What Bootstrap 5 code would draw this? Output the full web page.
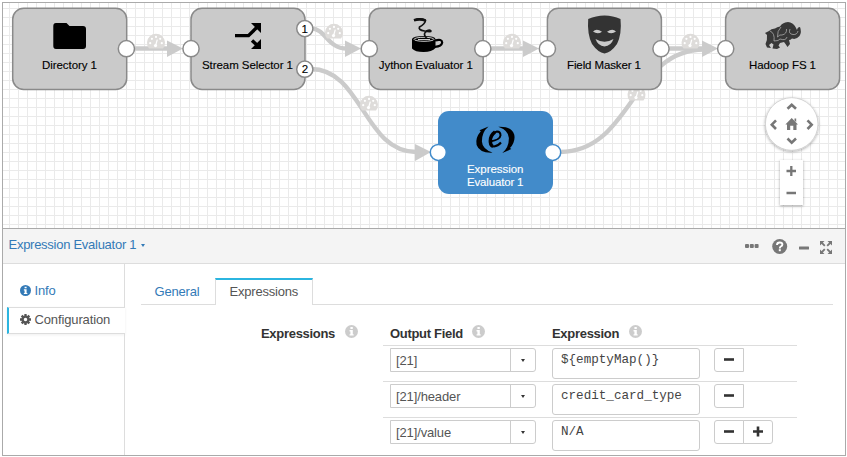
<!DOCTYPE html>
<html lang="en">
<head>
<meta charset="utf-8">
<title>Pipeline canvas</title>
<link href="https://cdn.jsdelivr.net/npm/bootstrap@5.3.0/dist/css/bootstrap.min.css" rel="stylesheet">
<style>
body{font-family:"Liberation Sans",Arial,sans-serif;font-size:13px;line-height:18px;letter-spacing:-.13px;color:#555;background:#fff;overflow:hidden}
svg{display:block;flex:none}
svg text{font-family:"Liberation Sans",Arial,sans-serif;letter-spacing:0}
.app-frame{width:844px;height:454px;margin:2px;border:1px solid #aaa;overflow:hidden}
.pipeline{height:225px;flex:none}
.panel-head{height:36px;border-top:1px solid #aaa;border-bottom:1px solid #ddd;background:#f4f4f4;padding:0 13px 2px 5.5px;flex:none;color:#337ab7}
.panel-title{letter-spacing:-.27px}
.panel-tools{margin-top:3px}
.caret-sm{border:2.5px solid transparent;border-top:3px solid currentColor;border-bottom:0;margin-left:5px}
.side{width:122px;flex:none}
.side-top{height:43px;border-right:1px solid #ddd;padding:18px 0 0 17px;color:#337ab7}
.side-active{height:27px;margin-left:4px;border:solid #ddd;border-width:1px 0;border-left:2px solid #2bb5e0;padding:3px 0 0 11px;box-shadow:0 1px 3px #0001}
.side-rest{border-right:1px solid #ddd}
.side svg{margin-right:3.5px}
.gear{margin-top:3px}
.content-pane{margin-left:16px;width:692px;flex:none;padding-top:14px}
.tab-row{height:27px;border-bottom:1px solid #ddd;letter-spacing:-.2px}
.tab-row .tab-a{width:74px;padding:5px 0 0 13.5px;color:#337ab7}
.tab-row .tab-b{width:98px;height:27px;border:1px solid #ddd;border-top:2px solid #2bb5e0;border-bottom:0;background:#fff;padding:3px 0 0 13.5px}
.form-area{padding-top:19px;color:#333}
.lbl-main{width:242px;padding-left:120px;flex:none}
.f-table{width:414px;flex:none}
.heading{letter-spacing:-.3px;font-weight:700;padding-top:1px;line-height:17px}
.heading svg{margin-left:9.500px}
.h-row{height:21px;padding-left:7px}
.h-row>div:first-child{width:162px}
.f-row{height:36px;border-top:1px solid #ddd;padding:2px 0 0 7px}
.pick{width:146px;height:24px;border:1px solid #ccc;border-radius:0 3px 3px 0;color:#555;flex:none}
.pick>span:first-child{width:120px;border-right:1px solid #ccc;padding:3px 0 0 5px}
.pick .caret-sm{margin:auto;color:#333}
.code-box{width:148px;height:31px;margin-left:16px;border:1px solid #ccc;border-radius:3px;padding:2px 0 0 8px;font:12.6px/18px "Liberation Mono","Courier New",monospace;letter-spacing:0;color:#444;flex:none;box-sizing:border-box}
.pm{margin-left:14px;height:24px}
.pm span{width:30px;height:24px;border:1px solid #ccc}
.pm span:first-child{border-radius:3px 0 0 3px}
.pm span+span{margin-left:-1px;border-radius:0 3px 3px 0}
</style>
<script src="https://cdn.jsdelivr.net/npm/bootstrap@5.3.0/dist/js/bootstrap.bundle.min.js"></script>
</head>
<body>
<div class="app-frame d-flex flex-column">
<div class="pipeline">
<svg width="842" height="225" viewBox="3 3 842 225">
<defs>
<pattern id="grid" width="9" height="9" patternUnits="userSpaceOnUse" x="0" y="8"><path d="M0 .5H9M.5 0V9" stroke="#eaeaea"/></pattern>
<symbol id="gauge" viewBox="0 0 18 15" overflow="visible"><path d="M2 14.5A9 9 0 1 1 16 14.5Z" fill="#dedcda"/><g fill="#fff"><circle cx="3.2" cy="9.2" r="1.1"/><circle cx="4.9" cy="4.8" r="1.1"/><circle cx="9" cy="2.9" r="1.1"/><circle cx="13.2" cy="4.8" r="1.1"/><circle cx="14.8" cy="9.2" r="1.1"/><circle cx="8.5" cy="11.6" r="1.6"/></g><path d="M8.6 11.5L10.3 5.6" stroke="#fff" stroke-width="1.2"/></symbol>
<symbol id="info" viewBox="0 0 12 12"><circle cx="6" cy="6" r="6" fill="currentColor"/><path d="M5 1.8H7.2V3.6H5ZM4.2 4.7H7.2V8.6H8V9.8H4.2V8.6H5V5.9H4.2Z" fill="#fff"/></symbol>
<filter id="soft" x="-20%" y="-20%" width="140%" height="140%"><feDropShadow dx="0" dy="1" stdDeviation="1.4" flood-opacity=".35"/></filter>
</defs>
<rect x="3" y="3" width="842" height="225" fill="url(#grid)"/>
<g fill="none" stroke="#cbcbcb" stroke-width="4.300">
<path d="M134 48.5H168M490 48.5H524M669 48.5H703"/>
<path d="M311 28.5C326 28.5 327 48.5 347 48.5"/>
<path d="M311 69C362 69 364 152 416 152"/>
<path d="M560 152C632 152 632 49.5 704 49.5"/>
</g>
<path fill="#cbcbcb" d="M167 40.5L183 48.5L167 57ZM345 40.5L361 48.5L345 57ZM523 40.5L539 48.5L523 57ZM702 40.5L718 48.5L702 57ZM415 144L431 152L415 161Z"/>
<use href="#gauge" x="147" y="34" width="18" height="15"/>
<use href="#gauge" x="325" y="24" width="18" height="15"/>
<use href="#gauge" x="503" y="34" width="18" height="15"/>
<use href="#gauge" x="681.5" y="34" width="18" height="15"/>
<use href="#gauge" x="360" y="96" width="18" height="15"/>
<use href="#gauge" x="627.5" y="86" width="18" height="15"/>
<g fill="#cacaca" stroke="#8a8a8a" stroke-width="1.5">
<rect x="12.7" y="8.2" width="114" height="81.2" rx="11"/><rect x="191" y="8.2" width="114" height="81.2" rx="11"/><rect x="369.2" y="8.2" width="114" height="81.2" rx="11"/><rect x="547.4" y="8.2" width="114" height="81.2" rx="11"/><rect x="725.6" y="8.2" width="114" height="81.2" rx="11"/>
</g>
<rect x="438" y="111" width="115" height="83" rx="11" fill="#428bca"/>
<g fill="#fff" stroke="#8a8a8a" stroke-width="1.5">
<circle cx="126.4" cy="48.7" r="8.1"/><circle cx="191" cy="48.7" r="8.1"/><circle cx="304.8" cy="28.6" r="8.1"/><circle cx="304.8" cy="69.2" r="8.1"/><circle cx="369.3" cy="48.7" r="8.1"/><circle cx="482.8" cy="48.7" r="8.1"/><circle cx="547.4" cy="48.7" r="8.1"/><circle cx="661" cy="48.7" r="8.1"/><circle cx="725.7" cy="48.7" r="8.1"/>
<g stroke="#428bca"><circle cx="438.3" cy="152.4" r="8"/><circle cx="552.7" cy="152.4" r="8"/></g>
</g>
<g font-size="11.5" fill="#000" stroke="#000" stroke-width=".12">
<text x="42" y="69.3" textLength="55">Directory 1</text>
<text x="202" y="69.3" textLength="91">Stream Selector 1</text>
<text x="378.8" y="69.3" textLength="94">Jython Evaluator 1</text>
<text x="567" y="69.3" textLength="74">Field Masker 1</text>
<text x="749" y="69.3" textLength="67">Hadoop FS 1</text>
<text x="301.6" y="32.700">1</text><text x="301.8" y="73.300">2</text>
<g fill="#fff" stroke="#fff"><text x="467" y="173" textLength="56.5">Expression</text><text x="467" y="185.5" textLength="56.5">Evaluator 1</text></g>
</g>
<path d="M56 23H66.5L69.5 26H83Q86 26 86 29V46Q86 49 83 49H56Q53.3 49 53.3 46V26Q53.3 23 56 23Z"/>
<path d="M235 35.6H248.5L257 27.3M252 40.5L258 46" fill="none" stroke="#000" stroke-width="3.4"/><path d="M251 23H261V33ZM261 39V49H251Z"/>
<!-- Coffee cup -->
<path d="M412 39Q413 36 424 36Q435 36 435.500 39V48Q432 52 423.500 52Q415 52 412 48.500Z"/>
<path d="M435 40.500Q442 38.500 442.200 42.500Q441.500 46.500 435 46.800" fill="none" stroke="#000" stroke-width="2.200"/>
<ellipse cx="424" cy="39.300" rx="10" ry="2" fill="none" stroke="#ccc" stroke-width="1"/><path d="M418 39.500H430" stroke="#ccc" stroke-width="1"/>
<path d="M414 20.200Q421 17.500 425.500 20.500Q425 24 419.500 27Q418 30 424.500 31Q431 32.500 431 31Q429 29 425.500 32Q423 34.500 426.500 38" fill="none" stroke="#111" stroke-width="1.700"/><path d="M414 20.200Q420 18.500 425.500 20.500" fill="none" stroke="#111" stroke-width="2.600"/>
<!-- Mask -->
<path fill="#333" fill-rule="evenodd" d="M588.200 19Q596 15.500 604.500 15.500Q613 15.500 620.500 19Q622 34 617 44Q611 52.500 604.500 53.500Q598 52.500 592 44Q587 34 588.200 19ZM593 31.500Q596.500 28 602 31.800Q597.500 35 593 31.500ZM607 31.800Q612.500 28 616 31.500Q611.500 35 607 31.800ZM595.500 39Q604.500 44.500 613.500 39Q611 46 604.500 46.500Q598 46 595.500 39Z"/>
<!-- Elephant -->
<path fill="#383838" d="M765 33L769 31Q771 28.500 775 28.500Q777 27 780 26.500Q782 22.500 788 22Q793 22.500 795.500 27L797 30Q797.500 27 800 27Q802 32 799.500 36Q796 40 792 38.500Q790.500 40 789 40L790 44L787.500 47L785.500 44L784 42L780 43L778.500 45.500L780 47.500L777 49L772.500 48.500L773.500 44.500L771.500 43L769 45L771 48L767 47.500L765.500 44Q767.500 40 767 35Z"/>
<path fill="none" stroke="#b8b8b8" stroke-width=".7" d="M770 31Q775 33 774 41Q779 41 780 39Q786 41 787 37M781 27Q777 31 777.500 37Q780 34 782 35Q787 34 786.500 29M790 29Q788 34 793 34.500Q797 35 798 31"/>
<!-- Italic e in brackets -->
<path id="br" d="M488.500 126.500L479.500 130.300L480.800 131.300Q475 138 476.600 145Q479.500 153.200 492.500 152.600Q482.300 149 481.900 141.500Q481.800 132 488.500 126.500Z"/>
<use href="#br" transform="rotate(180 495.400 139.700)"/>
<path d="M490 141.500Q500 140 500.500 135.500Q500.500 131.500 497 131.500Q492 132.500 490 139.500Q489 146.500 494 146.500Q498 146 501 142.500" fill="none" stroke="#000" stroke-width="2"/><path d="M495 132Q490.500 135 490.300 141Q490.500 145.500 493 146.500" fill="none" stroke="#000" stroke-width="3.400"/>
<!-- Navigation controls -->
<circle cx="791.700" cy="124" r="26.300" fill="#fff" stroke="#ccc" stroke-width=".8" filter="url(#soft)"/>
<rect x="780" y="160" width="23" height="45" fill="#fff" filter="url(#soft)"/>
<g fill="none" stroke="#777" stroke-width="2.600"><path d="M787.500 108.800L791.700 104.700L796 108.800M787.500 138.500L791.700 142.600L796 138.500M776 120.300L771.800 124.700L776 129M807.500 120.300L811.700 124.700L807.500 129"/><path d="M786.500 171H796M791.300 166V176M786.500 193H796" stroke-width="2.300"/></g>
<path fill="#777" d="M791.700 118L798 124.500H796.500V130H793.300V125.800H790.200V130H787V124.500H785.400ZM794.500 118.500H796.200V122L794.500 120.500Z"/>
</svg>
</div>
<div class="panel-head d-flex align-items-center">
<span class="panel-title">Expression Evaluator 1</span><span class="caret-sm"></span>
<svg class="panel-tools ms-auto" width="88" height="20" viewBox="744 236 88 20" fill="#777"><rect x="745" y="243" width="4" height="4" rx="1"/><rect x="749.800" y="243" width="4" height="4" rx="1"/><rect x="754.600" y="243" width="4" height="4" rx="1"/><circle cx="779.700" cy="245.500" r="7.500"/><path d="M777 244Q777 241.500 779.700 241.500Q782.400 241.500 782.400 243.500Q782.400 244.800 780.800 245.500Q779.800 246 779.800 247.400" fill="none" stroke="#fff" stroke-width="1.900"/><rect x="778.800" y="248.200" width="2" height="2" fill="#fff"/><rect x="799" y="245.500" width="10" height="3" rx=".5"/><path d="M820 240H824.500L820 244.500ZM827.500 240H832V244.500ZM820 248.500V253H824.500ZM832 248.500V253H827.500Z"/><path d="M821 241L824.800 244.800M831 241L827.200 244.800M821 252L824.800 248.200M831 252L827.200 248.200" stroke="#777" stroke-width="1.800"/></svg>
</div>
<div class="d-flex flex-grow-1">
<nav class="side d-flex flex-column">
<div class="side-top d-flex align-items-start"><svg width="11" height="11" class="gear"><use href="#info"/></svg><span>Info</span></div>
<div class="side-active d-flex align-items-start"><svg width="11" height="11" viewBox="0 0 12 12" class="gear"><path d="M6 0V12M0 6H12M1.800 1.800L10.200 10.200M10.200 1.800L1.800 10.200" stroke="#555" stroke-width="2.500"/><circle cx="6" cy="6" r="3.200" fill="#fff" stroke="#555" stroke-width="2.600"/></svg><span>Configuration</span></div>
<div class="side-rest flex-grow-1"></div>
</nav>
<main class="content-pane">
<div class="tab-row d-flex"><div class="tab-a">General</div><div class="tab-b">Expressions</div></div>
<div class="form-area d-flex">
<div class="lbl-main heading d-flex"><span>Expressions</span><svg width="13" height="13" color="#ccc"><use href="#info"/></svg></div>
<div class="f-table">
<div class="h-row heading d-flex"><div class="d-flex"><span>Output Field</span><svg width="13" height="13" color="#ccc"><use href="#info"/></svg></div><div class="d-flex"><span>Expression</span><svg width="13" height="13" color="#ccc"><use href="#info"/></svg></div></div>
<div class="f-row d-flex"><div class="pick d-flex"><span>[21]</span><span class="caret-sm"></span></div><div class="code-box">${emptyMap()}</div><div class="pm d-flex"><span><svg width="28" height="22"><path d="M9 10.500H19" stroke="#333" stroke-width="2.600"/></svg></span></div></div>
<div class="f-row d-flex"><div class="pick d-flex"><span>[21]/header</span><span class="caret-sm"></span></div><div class="code-box">credit_card_type</div><div class="pm d-flex"><span><svg width="28" height="22"><path d="M9 10.500H19" stroke="#333" stroke-width="2.600"/></svg></span></div></div>
<div class="f-row d-flex"><div class="pick d-flex"><span>[21]/value</span><span class="caret-sm"></span></div><div class="code-box">N/A</div><div class="pm d-flex"><span><svg width="28" height="22"><path d="M9 10.500H19" stroke="#333" stroke-width="2.600"/></svg></span><span><svg width="28" height="22"><path d="M9 10.500H19M14 5.500V15.500" stroke="#333" stroke-width="2.600"/></svg></span></div></div>
</div>
</div>
</main>
</div>
</div>
</body>
</html>
